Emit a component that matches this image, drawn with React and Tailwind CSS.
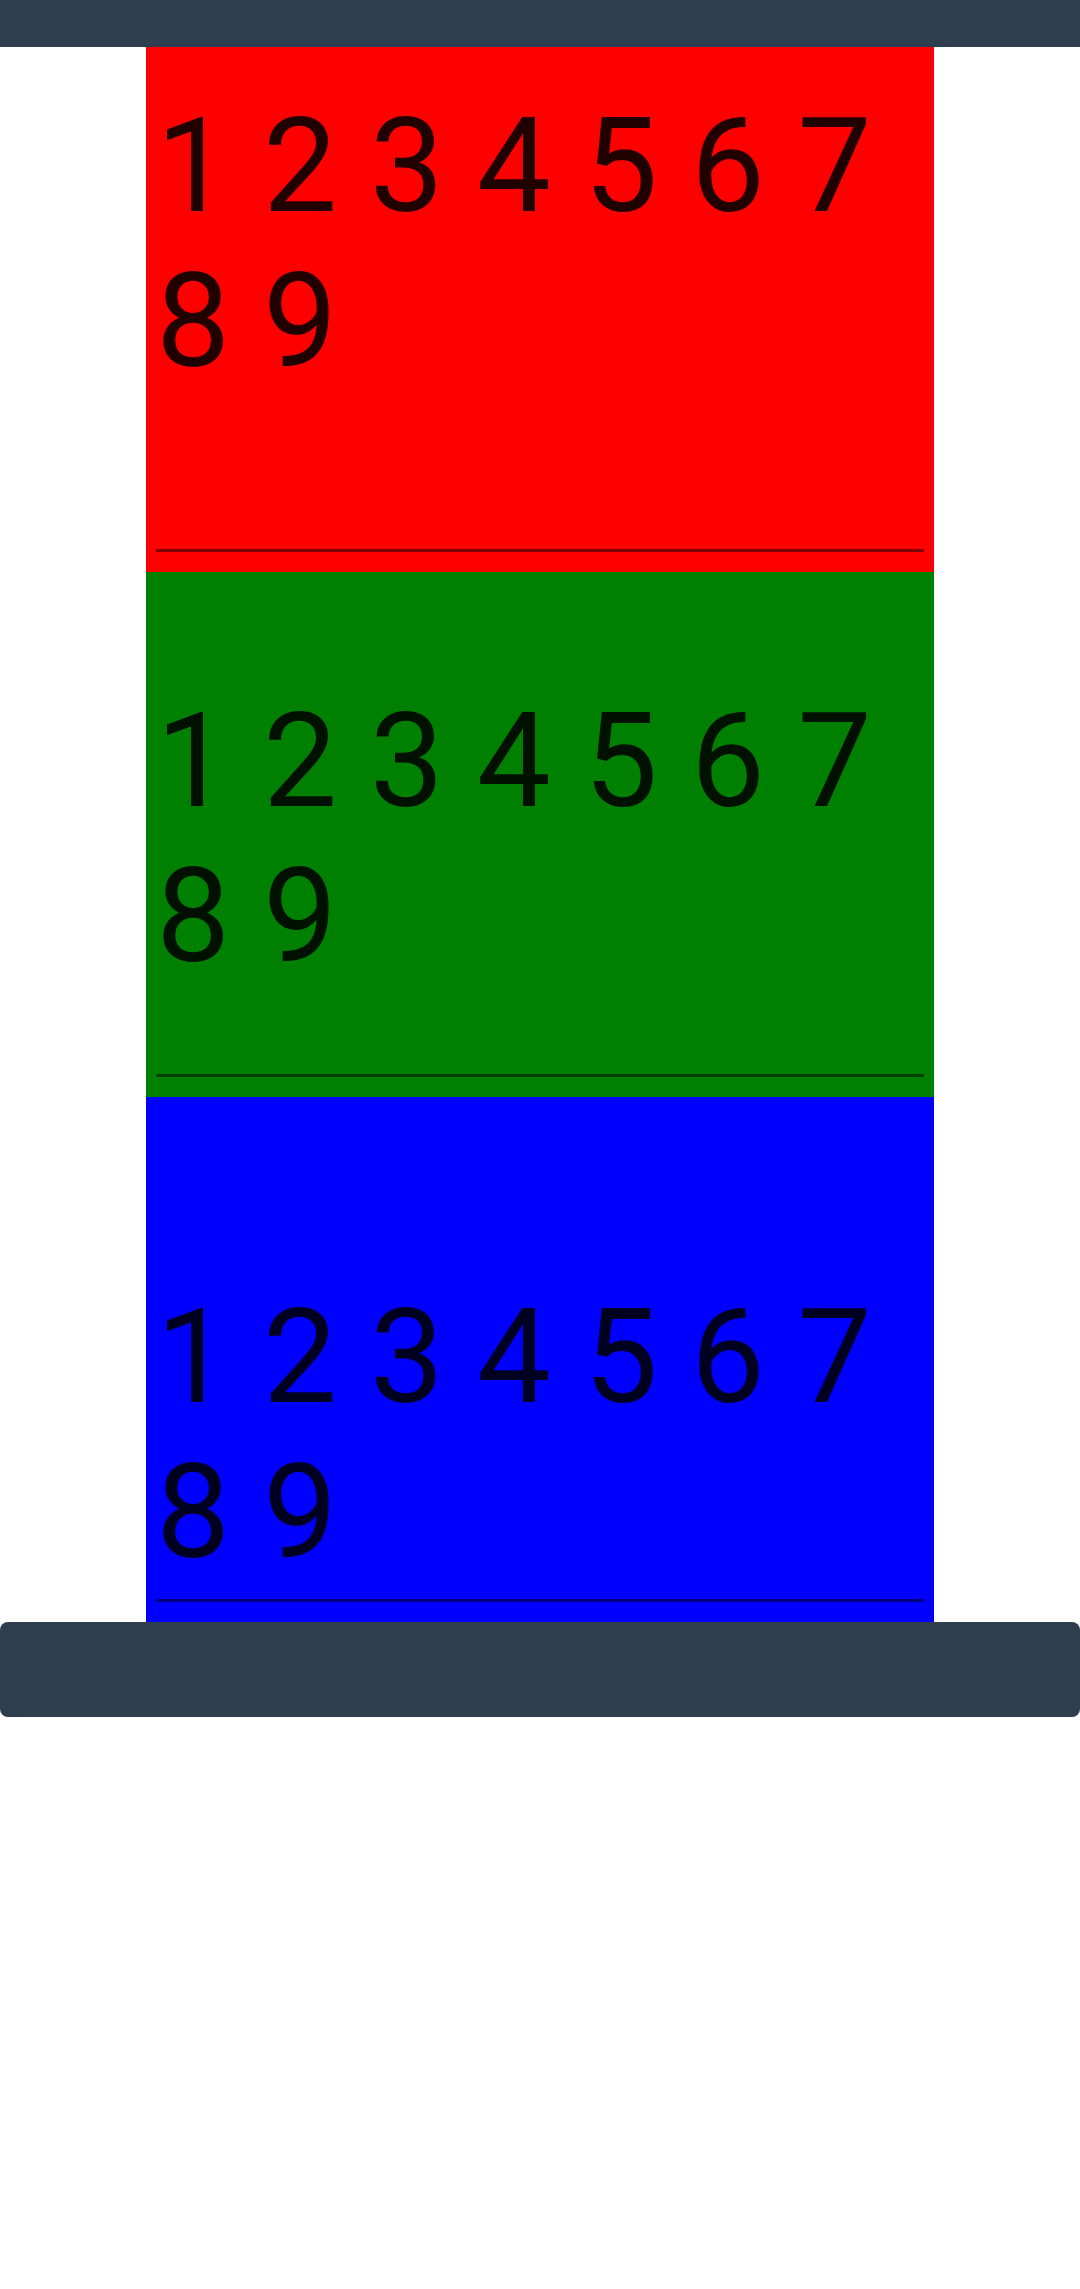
import React from 'react';

const blocks = [
    { bg: 'bg-[#ff0000]', pad: 'pt-[42px]' },
    { bg: 'bg-[#008000]', pad: 'pt-[112px]' },
    { bg: 'bg-[#0000ff]', pad: 'pt-[183px]' },
];

const Block = ({ bg, pad }) => (
    <div className={`${bg} h-[525px] px-[10px] flex flex-col`}>
        <div className={`${pad} text-[132px] leading-[1.172] text-black/[0.87]`}>
            1 2 3 4 5 6 7 8 9
        </div>
        <div className="mt-auto mb-[20px] h-[3px] bg-black/50" />
    </div>
);

const App = () => {
    return (
        <div className="min-h-[2289px] bg-white font-['Roboto',sans-serif]">
            {/* Header */}
            <div className="h-[47px] bg-[#2e3e4f]" />

            {/* Columns */}
            <div className="w-[788px] ml-[146px]">
                {blocks.map((b, i) => (
                    <Block key={i} bg={b.bg} pad={b.pad} />
                ))}
            </div>

            {/* Footer */}
            <div className="h-[95px] bg-[#2e3e4f] rounded-lg" />
        </div>
    );
};

export default App;
